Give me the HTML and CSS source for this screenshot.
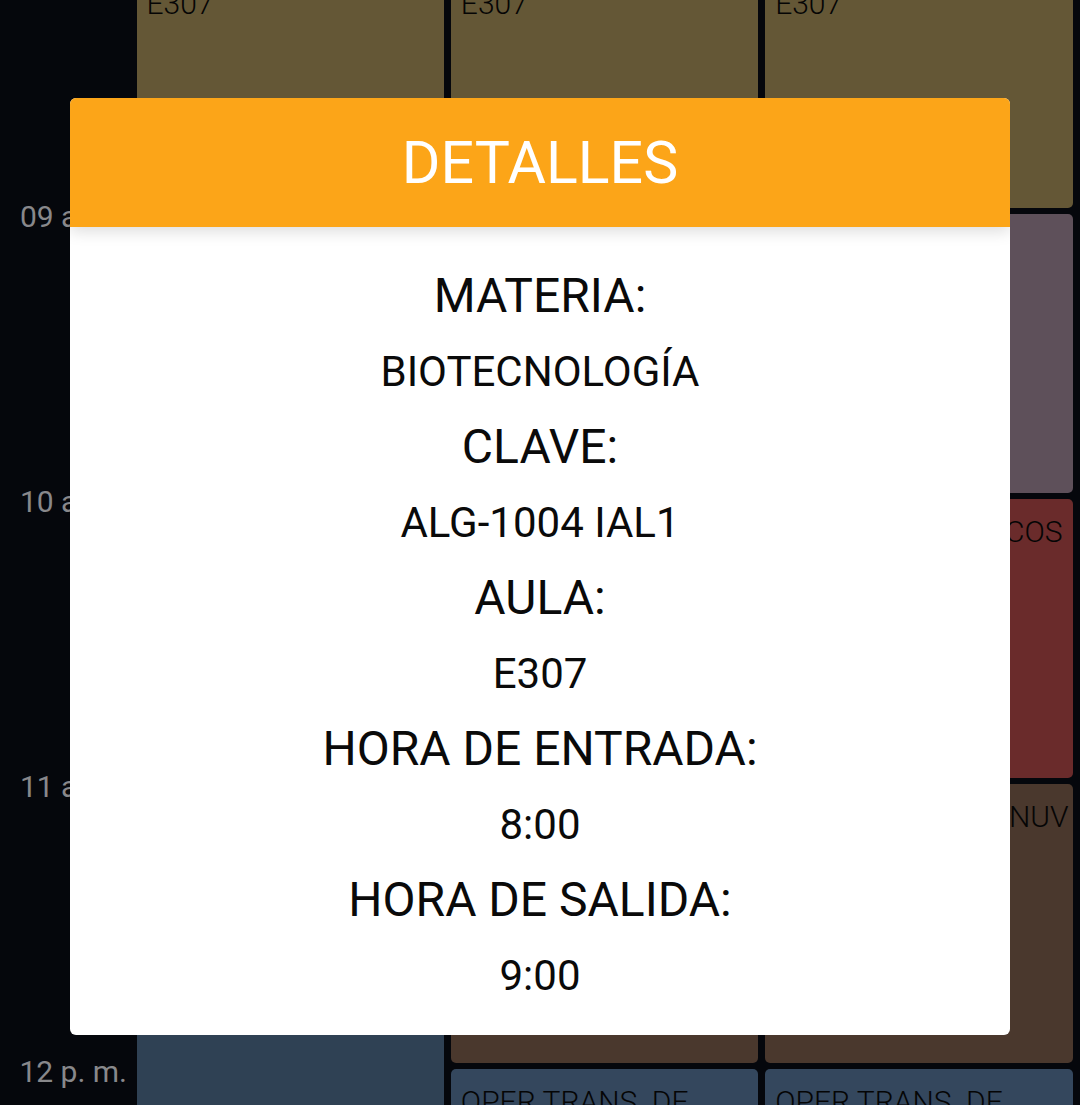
FILE: index.html
```html
<!DOCTYPE html>
<html lang="es">
<head>
<meta charset="utf-8">
<title>Horario - Detalles</title>
<link rel="stylesheet" href="styles.css">
</head>
<body>
<div class="screen">
  <div class="schedule">
    <div class="time row1">08 a. m.</div>
    <div class="time row2">09 a. m.</div>
    <div class="time row3">10 a. m.</div>
    <div class="time row4">11 a. m.</div>
    <div class="time row5">12 p. m.</div>

    <div class="card olive col1 row1"><div class="title">BIOTECNOLOGÍA</div><div class="room">E307</div></div>
    <div class="card olive col2 row1"><div class="title">BIOTECNOLOGÍA</div><div class="room">E307</div></div>
    <div class="card olive col3 row1"><div class="title">BIOTECNOLOGÍA</div><div class="room">E307</div></div>

    <div class="card mauve col2 row2"></div>
    <div class="card mauve col3 row2"></div>

    <div class="card red col2 row3"></div>
    <div class="card red col3 row3"><div class="title title-end">MÉTODOS NUMÉRICOS</div></div>

    <div class="card slate col1 row4-span"></div>

    <div class="card brown col2 row4"></div>
    <div class="card brown col3 row4"><div class="title title-end title-edge">CÓMPUTO EN LA NUV</div></div>

    <div class="card blue col2 row5"><div class="title">OPER TRANS. DE</div><div class="room">E302</div></div>
    <div class="card blue col3 row5"><div class="title">OPER TRANS. DE</div><div class="room">E302</div></div>
  </div>

  <div class="dialog">
    <div class="dialog-head">DETALLES</div>
    <div class="dialog-body">
      <div class="label">MATERIA:</div>
      <div class="value">BIOTECNOLOGÍA</div>
      <div class="label">CLAVE:</div>
      <div class="value">ALG-1004 IAL1</div>
      <div class="label">AULA:</div>
      <div class="value">E307</div>
      <div class="label">HORA DE ENTRADA:</div>
      <div class="value">8:00</div>
      <div class="label">HORA DE SALIDA:</div>
      <div class="value">9:00</div>
    </div>
  </div>
</div>
</body>
</html>
```

FILE: styles.css
```css
* { box-sizing: border-box; }

html, body {
  margin: 0;
  padding: 0;
  background: #05070c;
}

body {
  width: 1080px;
  height: 1105px;
  overflow: hidden;
  font-family: Roboto, "Noto Sans", "Liberation Sans", sans-serif;
}

.screen {
  position: relative;
  width: 1080px;
  height: 1105px;
  overflow: hidden;
}

.schedule {
  display: grid;
  grid-template-columns: 133px repeat(3, 1fr);
  grid-template-rows: repeat(5, 285px);
  margin-top: -74px;
  padding-right: 4px;
}

.time {
  grid-column: 1;
  align-self: start;
  margin-top: -12.5px;
  padding-right: 6px;
  text-align: right;
  font-size: 30px;
  line-height: 36px;
  color: #88888b;
  white-space: nowrap;
}

.row1 { grid-row: 1; }
.row2 { grid-row: 2; }
.row3 { grid-row: 3; }
.row4 { grid-row: 4; }
.row5 { grid-row: 5; }
.row4-span { grid-row: 4 / span 2; }
.col1 { grid-column: 2; }
.col2 { grid-column: 3; }
.col3 { grid-column: 4; }

.card {
  margin: 3px 3.5px;
  border-radius: 5px;
  padding: 12px 10px;
  color: #050505;
  font-size: 30px;
  font-weight: 300;
  line-height: 42px;
  overflow: hidden;
  min-width: 0;
}

.title { white-space: nowrap; overflow: hidden; }

.title-end {
  display: flex;
  justify-content: flex-end;
}

.title-edge { margin-right: -6px; }

.olive { background: #645736; }
.mauve { background: #5e505a; }
.red { background: #6a2b2b; }
.brown { background: #4a382d; }
.slate { background: #2f4154; }
.blue { background: #34475d; }

.dialog {
  position: absolute;
  left: 70px;
  top: 98px;
  width: 940px;
  height: 937px;
  background: #ffffff;
  border-radius: 6px;
  overflow: hidden;
  display: flex;
  flex-direction: column;
}

.dialog-head {
  position: relative;
  z-index: 1;
  height: 129px;
  flex: 0 0 129px;
  background: #fca518;
  color: #ffffff;
  display: flex;
  align-items: center;
  justify-content: center;
  font-size: 59px;
  font-weight: 400;
  box-shadow: 0 5px 14px rgba(0, 0, 0, 0.13);
}

.dialog-body {
  padding-top: 31px;
  text-align: center;
  color: #0a0a0a;
}

.label {
  font-size: 48px;
  line-height: 75.5px;
}

.value {
  font-size: 42px;
  line-height: 75.5px;
}
```
